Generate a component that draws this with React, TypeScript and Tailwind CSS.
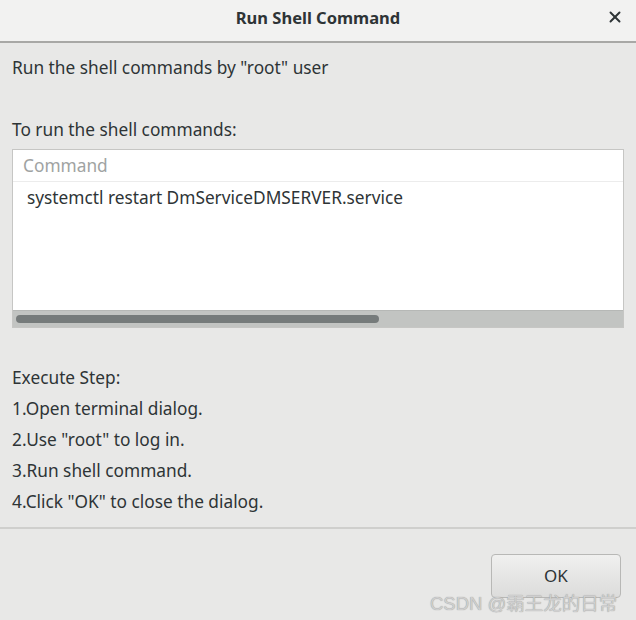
import { X } from 'lucide-react';

const steps = [
  'Execute Step:',
  '1.Open terminal dialog.',
  '2.Use "root" to log in.',
  '3.Run shell command.',
  '4.Click "OK" to close the dialog.',
];

export default function App() {
  return (
    <div
      className="w-[636px] h-[620px] flex flex-col bg-[#e8e8e7] text-[#2e3436] text-[17.3px] overflow-hidden"
      style={{ fontFamily: '"Noto Sans", "Noto Sans CJK SC", sans-serif' }}
    >
      {/* title bar */}
      <div className="h-[43px] shrink-0 relative flex items-center justify-center pb-[4px] bg-[#f2f2f1] border-b-[2px] border-[#a8a8a6]">
        <span className="font-bold text-[16.5px] text-[#2e3436]">Run Shell Command</span>
        <X size={18} strokeWidth={2.6} className="absolute right-[12px] top-[8px] text-[#2e3436]" />
      </div>

      {/* body */}
      <div className="flex-1 flex flex-col px-[12px]">
        <p className="mt-[14px] leading-[22px]">Run the shell commands by "root" user</p>
        <p className="mt-[40px] leading-[22px]">To run the shell commands:</p>

        <div className="mt-[8px] w-[612px] border border-[#c6c6c4] bg-white flex flex-col">
          <div className="h-[32px] flex items-center px-[10px] text-[#a0a3a2] border-b border-[#ececec]">
            Command
          </div>
          <div className="h-[128px] px-[14px] pt-[5px] leading-[22px]">
            systemctl restart DmServiceDMSERVER.service
          </div>
          <div className="h-[17px] bg-[#c2c4c2] border-t border-[#b6b8b6] flex items-center px-[3px]">
            <div className="h-[8px] w-[363px] rounded-full bg-[#767b7b]" />
          </div>
        </div>

        <div className="mt-[39px] flex flex-col gap-[9px]">
          {steps.map((s) => (
            <p key={s} className="leading-[22px]">{s}</p>
          ))}
        </div>
      </div>

      {/* footer */}
      <div className="h-[93px] shrink-0 border-t-[2px] border-[#cfcfcd] relative">
        <button className="absolute left-[491px] top-[25px] w-[130px] h-[44px] rounded-[4px] border border-[#b8b8b6] bg-gradient-to-b from-[#f0f0ef] to-[#dcdcdb] text-[17px] text-[#2e3436]">
          OK
        </button>
        <span
          className="absolute left-[430px] top-[61px] text-[18.5px] text-[#cfcfcf] whitespace-nowrap [text-shadow:0_0_1px_#8a8a8a]"
          style={{ fontFamily: '"Liberation Sans", "Noto Sans CJK SC", sans-serif' }}
        >
          CSDN @霸王龙的日常
        </span>
      </div>
    </div>
  );
}
